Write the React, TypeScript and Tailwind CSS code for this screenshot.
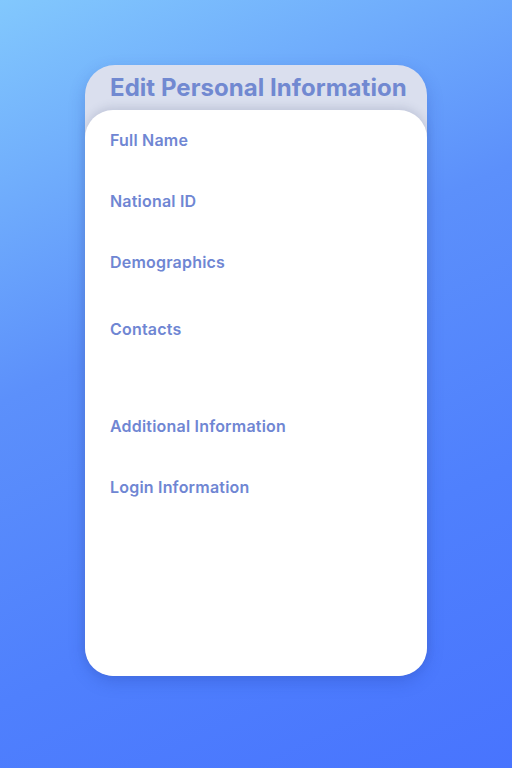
import React from 'react';

const sections = [
  { label: 'Full Name', gap: 'mt-[18px]' },
  { label: 'National ID', gap: 'mt-[37px]' },
  { label: 'Demographics', gap: 'mt-[37px]' },
  { label: 'Contacts', gap: 'mt-[43px]' },
  { label: 'Additional Information', gap: 'mt-[73px]' },
  { label: 'Login Information', gap: 'mt-[37px]' },
];

const App: React.FC = () => {
  return (
    <div
      className="min-h-[768px] w-full bg-[linear-gradient(155deg,#82c8fd_0%,#5c90fb_40%,#4f80fd_70%,#4874fe_100%)] flex justify-center pt-[65px]"
      style={{ fontFamily: 'Inter, "Noto Sans", sans-serif' }}
    >
      <div className="w-[342px] h-[611px] rounded-[30px] bg-[#dadfee] flex flex-col shadow-[0_6px_16px_rgba(30,60,160,0.25)]">
        <div className="h-[45px] flex items-center pl-[25px]">
          <h1 className="text-[24px] leading-none font-bold text-[#7189d1] tracking-[0.05px]">Edit Personal Information</h1>
        </div>
        <div className="flex-1 rounded-[28px] bg-white flex flex-col px-[25px] shadow-[0_-3px_8px_rgba(80,90,130,0.18)]">
          {sections.map((s) => (
            <div key={s.label} className={`${s.gap} h-6 flex items-center text-base font-semibold tracking-[0.2px] text-[#6f86d3]`}>
              {s.label}
            </div>
          ))}
        </div>
      </div>
    </div>
  );
};

export default App;
